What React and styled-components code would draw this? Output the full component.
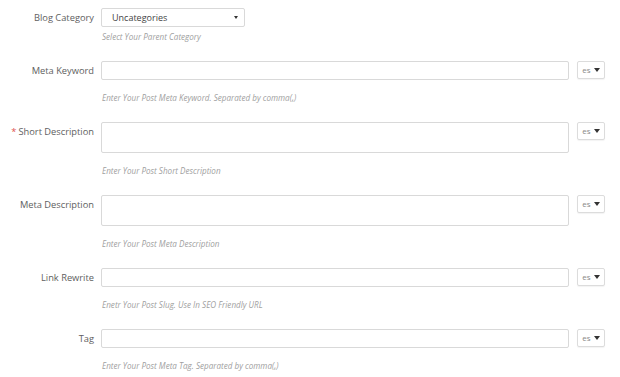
import React from "react";
import styled, { createGlobalStyle } from "styled-components";

const Global = createGlobalStyle`
  html, body { margin: 0; padding: 0; background: #fff; }
  body { font-family: "Open Sans", "Liberation Sans", sans-serif; }
  * { box-sizing: border-box; }
`;

const Form = styled.div`
  width: 620px;
  padding: 8px 15px 0 0;
  display: flex;
  flex-direction: column;
  gap: 18px;
`;

const Group = styled.div`
  display: flex;
  align-items: flex-start;
`;

const Label = styled.div`
  width: 94px;
  flex: none;
  text-align: right;
  font-size: 9.3px;
  line-height: 19px;
  color: #5e5e5e;
  white-space: nowrap;
`;

const Req = styled.span`
  color: #e0534f;
  margin-right: 2px;
`;

const Body = styled.div`
  margin-left: 7px;
  flex: 1;
  display: flex;
  flex-direction: column;
`;

const FieldRow = styled.div`
  display: flex;
  align-items: flex-start;
  gap: 8px;
`;

const Input = styled.div`
  flex: 1;
  height: ${(p) => (p.$tall ? 31 : 19)}px;
  border: 1px solid #d9d9d9;
  border-radius: 2px;
  background: #fff;
`;

const Select = styled.div`
  width: 144px;
  height: 19px;
  border: 1px solid #d9d9d9;
  border-radius: 2px;
  background: #fff;
  display: flex;
  align-items: center;
  justify-content: space-between;
  padding: 0 6px 0 10px;
  font-size: 9px;
  color: #444;
`;

const Caret = styled.span`
  width: 0;
  height: 0;
  border-left: ${(p) => p.$s}px solid transparent;
  border-right: ${(p) => p.$s}px solid transparent;
  border-top: ${(p) => p.$s + 1}px solid #333;
`;

const LangBtn = styled.div`
  width: 28px;
  height: 18px;
  flex: none;
  border: 1px solid #dcdcdc;
  border-radius: 2px;
  background: #fff;
  box-shadow: 0 1px 1px rgba(0, 0, 0, 0.05);
  display: flex;
  align-items: center;
  justify-content: center;
  gap: 3px;
  font-size: 8px;
  color: #888;
  padding-bottom: 1px;
`;

const Help = styled.div`
  margin-top: ${(p) => (p.$tight ? 4 : 12)}px;
  font-size: 8.1px;
  line-height: 12px;
  font-style: italic;
  color: #a0a0a0;
  padding-left: 1px;
`;

const fields = [
  { label: "Meta Keyword", help: "Enter Your Post Meta Keyword. Separated by comma(,)" },
  { label: "Short Description", help: "Enter Your Post Short Description", tall: true, req: true },
  { label: "Meta Description", help: "Enter Your Post Meta Description", tall: true },
  { label: "Link Rewrite", help: "Enetr Your Post Slug. Use In SEO Friendly URL" },
  { label: "Tag", help: "Enter Your Post Meta Tag. Separated by comma(,)" },
];

export default function App() {
  return (
    <>
      <Global />
      <Form>
        <Group>
          <Label>Blog Category</Label>
          <Body>
            <Select>
              <span>Uncategories</span>
              <Caret $s={2} />
            </Select>
            <Help $tight>Select Your Parent Category</Help>
          </Body>
        </Group>
        {fields.map((f) => (
          <Group key={f.label}>
            <Label>
              {f.req && <Req>*</Req>}
              {f.label}
            </Label>
            <Body>
              <FieldRow>
                <Input $tall={f.tall} />
                <LangBtn>
                  es <Caret $s={3} />
                </LangBtn>
              </FieldRow>
              <Help>{f.help}</Help>
            </Body>
          </Group>
        ))}
      </Form>
    </>
  );
}
